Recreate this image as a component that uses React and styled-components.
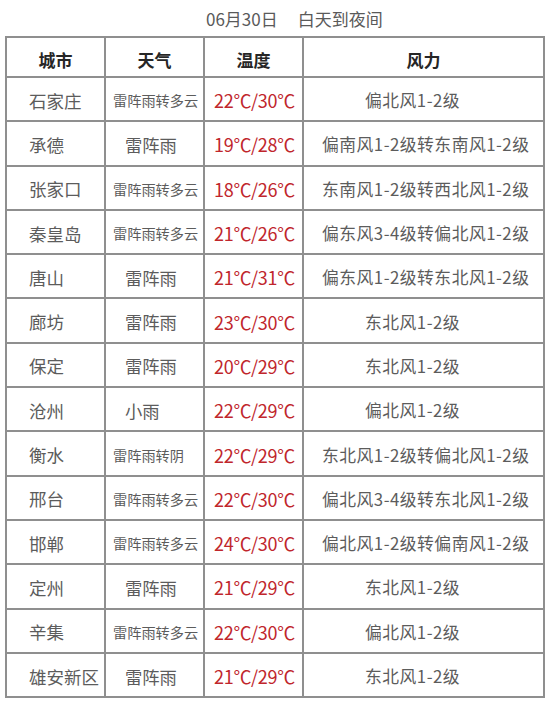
import styled, { createGlobalStyle } from "styled-components";

const GlobalStyle = createGlobalStyle`
  html, body {
    margin: 0;
    padding: 0;
    background: #fff;
  }
  body {
    font-family: "Noto Sans CJK SC", "Noto Sans", sans-serif;
  }
`;

const rows = [
  { city: "石家庄", weather: "雷阵雨转多云", temp: "22℃/30℃", wind: "偏北风1-2级" },
  { city: "承德", weather: "雷阵雨", temp: "19℃/28℃", wind: "偏南风1-2级转东南风1-2级" },
  { city: "张家口", weather: "雷阵雨转多云", temp: "18℃/26℃", wind: "东南风1-2级转西北风1-2级" },
  { city: "秦皇岛", weather: "雷阵雨转多云", temp: "21℃/26℃", wind: "偏东风3-4级转偏北风1-2级" },
  { city: "唐山", weather: "雷阵雨", temp: "21℃/31℃", wind: "偏东风1-2级转东北风1-2级" },
  { city: "廊坊", weather: "雷阵雨", temp: "23℃/30℃", wind: "东北风1-2级" },
  { city: "保定", weather: "雷阵雨", temp: "20℃/29℃", wind: "东北风1-2级" },
  { city: "沧州", weather: "小雨", temp: "22℃/29℃", wind: "偏北风1-2级" },
  { city: "衡水", weather: "雷阵雨转阴", temp: "22℃/29℃", wind: "东北风1-2级转偏北风1-2级" },
  { city: "邢台", weather: "雷阵雨转多云", temp: "22℃/30℃", wind: "偏北风3-4级转东北风1-2级" },
  { city: "邯郸", weather: "雷阵雨转多云", temp: "24℃/30℃", wind: "偏北风1-2级转偏南风1-2级" },
  { city: "定州", weather: "雷阵雨", temp: "21℃/29℃", wind: "东北风1-2级" },
  { city: "辛集", weather: "雷阵雨转多云", temp: "22℃/30℃", wind: "偏北风1-2级" },
  { city: "雄安新区", weather: "雷阵雨", temp: "21℃/29℃", wind: "东北风1-2级" },
];

const Page = styled.div`
  width: 550px;
  height: 702px;
  overflow: hidden;
  background: #fff;
`;

const Title = styled.div`
  height: 36px;
  display: flex;
  align-items: center;
  gap: 20px;
  padding-left: 206px;
  font-size: 17px;
  color: #5a5a5a;
  box-sizing: border-box;
`;

const Table = styled.table`
  margin-left: 5px;
  width: 540px;
  border-collapse: collapse;
  table-layout: fixed;
  border: 2px solid #8f8f8f;
`;

const HeadCell = styled.th`
  height: 40px;
  padding: 4px 0 0;
  box-sizing: border-box;
  border: 2px solid #8f8f8f;
  font-size: 17px;
  font-weight: 700;
  color: #262626;
  text-align: center;
`;

const Cell = styled.td`
  height: 44.3px;
  padding: 2px 0 0;
  box-sizing: border-box;
  border: 2px solid #8f8f8f;
  color: #5c5c5c;
  white-space: nowrap;
  vertical-align: middle;
`;

const CityCell = styled(Cell)`
  font-size: 17.5px;
  padding-left: 22px;
`;

const WeatherCell = styled(Cell)`
  font-size: ${(p) => (p.$small ? "14.2px" : "17.3px")};
  padding-left: ${(p) => (p.$small ? "7px" : "19px")};
`;

const TempCell = styled(Cell)`
  font-size: 18px;
  color: #c0262c;
  padding-left: 9px;
  letter-spacing: -0.3px;
`;

const WindCell = styled(Cell)`
  font-size: 16.8px;
  letter-spacing: 0.5px;
  padding-left: ${(p) => (p.$short ? "61px" : "18px")};
`;

export default function App() {
  return (
    <Page>
      <GlobalStyle />
      <Title>
        <span>06月30日</span>
        <span>白天到夜间</span>
      </Title>
      <Table>
        <colgroup>
          <col style={{ width: 99 }} />
          <col style={{ width: 99 }} />
          <col style={{ width: 99 }} />
          <col />
        </colgroup>
        <thead>
          <tr>
            <HeadCell>城市</HeadCell>
            <HeadCell>天气</HeadCell>
            <HeadCell>温度</HeadCell>
            <HeadCell>风力</HeadCell>
          </tr>
        </thead>
        <tbody>
          {rows.map((r) => (
            <tr key={r.city}>
              <CityCell>{r.city}</CityCell>
              <WeatherCell $small={r.weather.length > 3}>{r.weather}</WeatherCell>
              <TempCell>{r.temp}</TempCell>
              <WindCell $short={!r.wind.includes("转")}>{r.wind}</WindCell>
            </tr>
          ))}
        </tbody>
      </Table>
    </Page>
  );
}
